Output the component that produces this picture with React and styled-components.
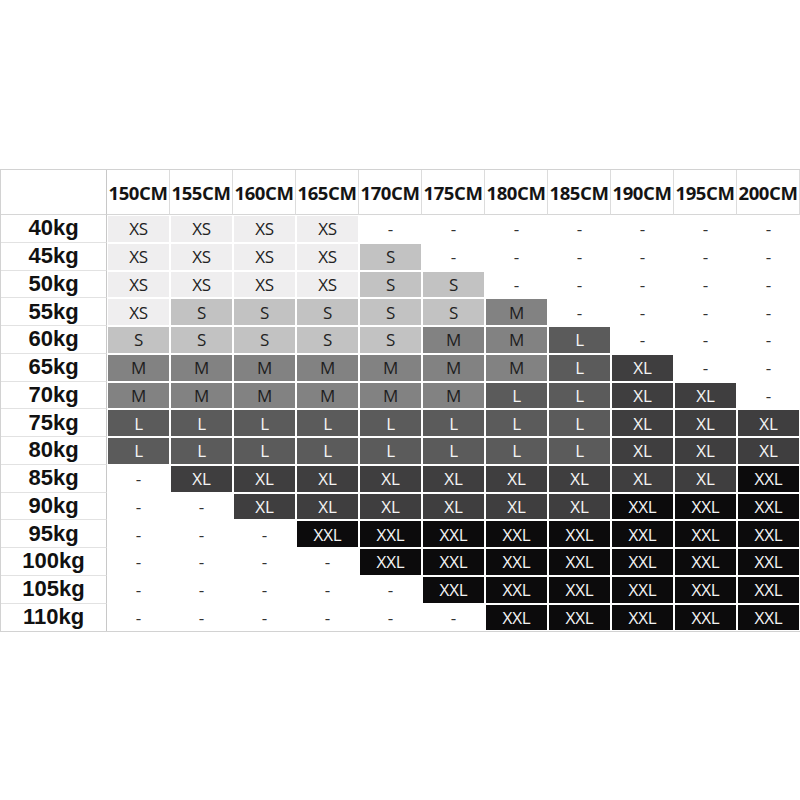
import React from 'react'
import styled, { createGlobalStyle } from 'styled-components'

const heights = ['150CM', '155CM', '160CM', '165CM', '170CM', '175CM', '180CM', '185CM', '190CM', '195CM', '200CM']

const rows = [
  ['40kg', 'XS XS XS XS - - - - - - -'],
  ['45kg', 'XS XS XS XS S - - - - - -'],
  ['50kg', 'XS XS XS XS S S - - - - -'],
  ['55kg', 'XS S S S S S M - - - -'],
  ['60kg', 'S S S S S M M L - - -'],
  ['65kg', 'M M M M M M M L XL - -'],
  ['70kg', 'M M M M M M L L XL XL -'],
  ['75kg', 'L L L L L L L L XL XL XL'],
  ['80kg', 'L L L L L L L L XL XL XL'],
  ['85kg', '- XL XL XL XL XL XL XL XL XL XXL'],
  ['90kg', '- - XL XL XL XL XL XL XXL XXL XXL'],
  ['95kg', '- - - XXL XXL XXL XXL XXL XXL XXL XXL'],
  ['100kg', '- - - - XXL XXL XXL XXL XXL XXL XXL'],
  ['105kg', '- - - - - XXL XXL XXL XXL XXL XXL'],
  ['110kg', '- - - - - - XXL XXL XXL XXL XXL'],
]

const tones = {
  '-': { bg: '#ffffff', fg: '#333333' },
  XS: { bg: '#efeeef', fg: '#222222' },
  S: { bg: '#c2c2c2', fg: '#222222' },
  M: { bg: '#828282', fg: '#1e1e1e' },
  L: { bg: '#5b5b5b', fg: '#f4f4f4' },
  XL: { bg: '#3f3e3f', fg: '#f4f4f4' },
  XXL: { bg: '#0c0b0c', fg: '#f4f4f4' },
}

const Global = createGlobalStyle`
  html, body { margin: 0; padding: 0; background: #fff; }
`

const Page = styled.div`
  width: 800px;
  height: 800px;
  padding-top: 169px;
  box-sizing: border-box;
`

const Table = styled.div`
  display: grid;
  grid-template-columns: 106px repeat(11, 63px);
  grid-template-rows: 45px repeat(15, 27.75px);
  border: 1px solid #d2d2d2;
  border-right: none;
  width: 800px;
  box-sizing: border-box;
`

const Corner = styled.div`
  border-right: 1px solid #c8c8c8;
  border-bottom: 1px solid #d6d6d6;
`

const HeadCell = styled.div`
  display: flex;
  align-items: center;
  justify-content: center;
  border-right: 1px solid #dcdcdc;
  border-bottom: 1px solid #d6d6d6;
  font-family: 'Open Sans', sans-serif;
  font-weight: 700;
  font-size: 18.5px;
  letter-spacing: -0.4px;
  color: #141414;
  &:last-of-type { border-right: none; }
`

const Label = styled.div`
  display: flex;
  align-items: center;
  justify-content: center;
  border-right: 1px solid #c8c8c8;
  border-bottom: 1px solid #e2e2e2;
  font-family: 'Liberation Sans', Arial, sans-serif;
  font-weight: 700;
  font-size: 22px;
  color: #111;
  ${p => p.$last && 'border-bottom: none;'}
`

const Cell = styled.div`
  display: flex;
  align-items: center;
  justify-content: center;
  box-sizing: border-box;
  border: 1px solid #fff;
  background: ${p => tones[p.$size].bg};
  color: ${p => tones[p.$size].fg};
  font-family: 'Open Sans', sans-serif;
  font-size: 17px;
  letter-spacing: -0.2px;
`

export default function App() {
  return (
    <Page>
      <Global />
      <Table>
        <Corner />
        {heights.map(h => <HeadCell key={h}>{h}</HeadCell>)}
        {rows.map(([kg, sizes], i) => (
          <React.Fragment key={kg}>
            <Label $last={i === rows.length - 1}>{kg}</Label>
            {sizes.split(' ').map((s, j) => (
              <Cell key={j} $size={s}>{s}</Cell>
            ))}
          </React.Fragment>
        ))}
      </Table>
    </Page>
  )
}
